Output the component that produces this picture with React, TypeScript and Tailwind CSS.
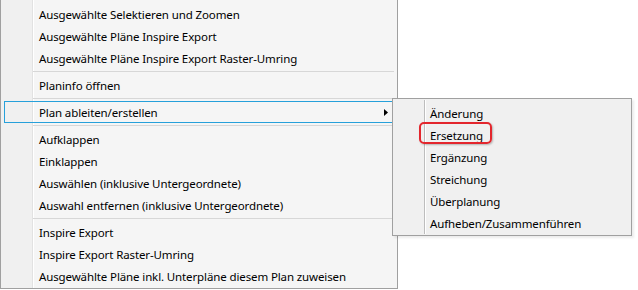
import React from "react";

type Item = { type: "item"; label: string; active?: boolean; sub?: boolean } | { type: "sep" };

const mainItems: Item[] = [
  { type: "item", label: "Ausgewählte Selektieren und Zoomen" },
  { type: "item", label: "Ausgewählte Pläne Inspire Export" },
  { type: "item", label: "Ausgewählte Pläne Inspire Export Raster-Umring" },
  { type: "sep" },
  { type: "item", label: "Planinfo öffnen" },
  { type: "sep" },
  { type: "item", label: "Plan ableiten/erstellen", active: true, sub: true },
  { type: "sep" },
  { type: "item", label: "Aufklappen" },
  { type: "item", label: "Einklappen" },
  { type: "item", label: "Auswählen (inklusive Untergeordnete)" },
  { type: "item", label: "Auswahl entfernen (inklusive Untergeordnete)" },
  { type: "sep" },
  { type: "item", label: "Inspire Export" },
  { type: "item", label: "Inspire Export Raster-Umring" },
  { type: "item", label: "Ausgewählte Pläne inkl. Unterpläne diesem Plan zuweisen" },
];

const subItems = ["Änderung", "Ersetzung", "Ergänzung", "Streichung", "Überplanung", "Aufheben/Zusammenführen"];

export default function App() {
  return (
    <div
      className="relative w-[638px] h-[290px] bg-white text-[11.5px] tracking-[-0.12px] text-black leading-none"
      style={{ fontFamily: '"Noto Sans", "Open Sans", sans-serif' }}
    >
      {/* main menu */}
      <div className="flex w-[398px] h-[289px] border-x border-b border-[#a0a0a0] bg-[#f5f5f5]">
        <div className="w-[31px] bg-[#f0f0f0]" />
        <div className="w-px bg-[#e2e2e2]" />
        <div className="w-px bg-white" />
        <div className="flex-1 flex flex-col pt-[3px]">
          {mainItems.map((it, i) =>
            it.type === "sep" ? (
              <div key={i} className="h-[5px] pt-[2px] pr-[3px] ml-[-1px]">
                <div className="h-px bg-[#d7d7d7]" />
              </div>
            ) : (
              <div key={i} className="relative h-[22px] flex items-center pl-[5px]">
                {it.active && (
                  <div className="absolute left-[-30px] right-[3px] top-0 bottom-0 border border-[#26a0da]" />
                )}
                <span className="relative pt-[2px]">{it.label}</span>
                {it.sub && (
                  <svg className="relative ml-auto mr-[9px]" width="4" height="7" viewBox="0 0 4 7">
                    <path d="M0 0 L4 3.5 L0 7 Z" fill="#000" />
                  </svg>
                )}
              </div>
            )
          )}
        </div>
      </div>

      {/* submenu */}
      <div className="absolute left-[392px] top-[98px] w-[240px] h-[138px] flex border border-[#a0a0a0] bg-[#f0f0f0] shadow-[2px_2px_2px_rgba(0,0,0,0.08)]">
        <div className="w-[31px]" />
        <div className="w-px bg-[#bdbdbd] my-[1px]" />
        <div className="w-px bg-white my-[1px]" />
        <div className="flex-1 flex flex-col pt-[3px]">
          {subItems.map((s) => (
            <div key={s} className="h-[22px] flex items-center pl-[4px]">
              <span className="pt-[2px]">{s}</span>
            </div>
          ))}
        </div>
      </div>

      {/* red annotation */}
      <div className="absolute left-[419px] top-[122px] w-[73px] h-[22px] rounded-[5px] border-2 border-[#e3262d] shadow-[1px_1px_2px_rgba(0,0,0,0.25)]" />
    </div>
  );
}
